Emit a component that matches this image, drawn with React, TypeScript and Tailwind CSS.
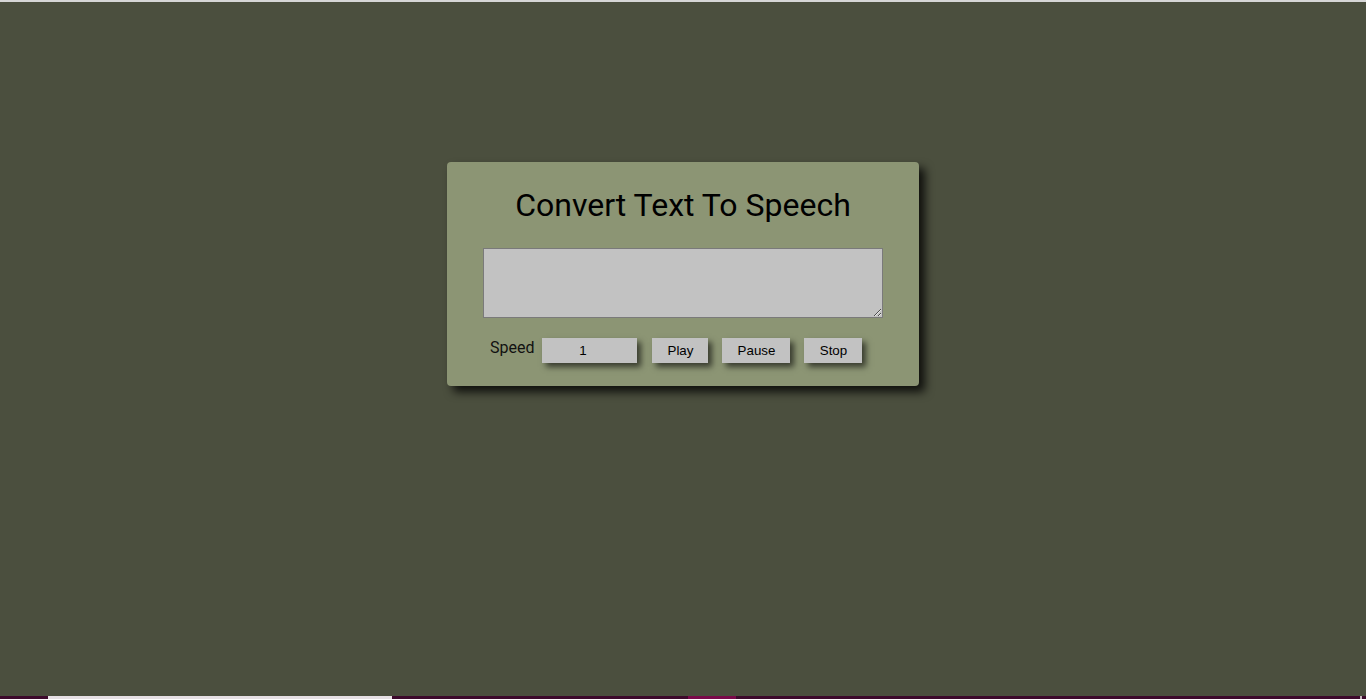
import React from "react";

export default function App() {
  const btn =
    "h-[25px] bg-[#c2c2c2] text-black text-[13.33px] shadow-[4px_4px_6px_rgba(0,0,0,0.6)] flex items-center justify-center";
  return (
    <div className="h-[699px] w-full flex flex-col bg-[#4b4f3e] overflow-hidden" style={{ fontFamily: "Roboto, 'Liberation Sans', sans-serif" }}>
      <div className="h-[2px] bg-[#d6d6d6]" />
      <main className="flex-1 flex justify-center pt-[160px]">
        <div className="w-[472px] h-[224px] bg-[#8c9574] rounded-[4px] shadow-[6px_6px_10px_rgba(0,0,0,0.8)] flex flex-col pt-[25px] px-[36px]">
          <h1 className="text-[32px] leading-[37px] text-black text-center" style={{ fontFamily: "Roboto, sans-serif", fontWeight: 400 }}>
            Convert Text To Speech
          </h1>
          <textarea className="mt-[24px] w-[400px] h-[70px] bg-[#c2c2c2] border border-[#7a7a7a] outline-none resize" />
          <div className="mt-[20px] pl-[7px] flex items-start">
            <span className="text-[16px] leading-[19px] text-[#111]" style={{ fontFamily: "Roboto, sans-serif" }}>Speed</span>
            <input
              type="text"
              defaultValue="1"
              className="ml-[8px] w-[95px] h-[25px] bg-[#c2c2c2] text-center pr-[14px] text-[13.33px] text-black outline-none shadow-[4px_4px_6px_rgba(0,0,0,0.6)]"
              style={{ fontFamily: "'Liberation Sans', Arial, sans-serif" }}
            />
            <button className={`${btn} ml-[15px] w-[56px]`} style={{ fontFamily: "'Liberation Sans', Arial, sans-serif" }}>Play</button>
            <button className={`${btn} ml-[14px] w-[68px]`} style={{ fontFamily: "'Liberation Sans', Arial, sans-serif" }}>Pause</button>
            <button className={`${btn} ml-[14px] w-[58px]`} style={{ fontFamily: "'Liberation Sans', Arial, sans-serif" }}>Stop</button>
          </div>
        </div>
      </main>
      <div className="h-[3px] flex bg-[#3d0a2c]">
        <div className="w-[48px]" />
        <div className="w-[344px] bg-[#e6e0e4]" />
        <div className="w-[296px]" />
        <div className="w-[48px] bg-[#7a0a4a]" />
        <div className="flex-1" />
        <div className="w-[2px] bg-[#c8b8c0] mr-[4px]" />
      </div>
    </div>
  );
}
